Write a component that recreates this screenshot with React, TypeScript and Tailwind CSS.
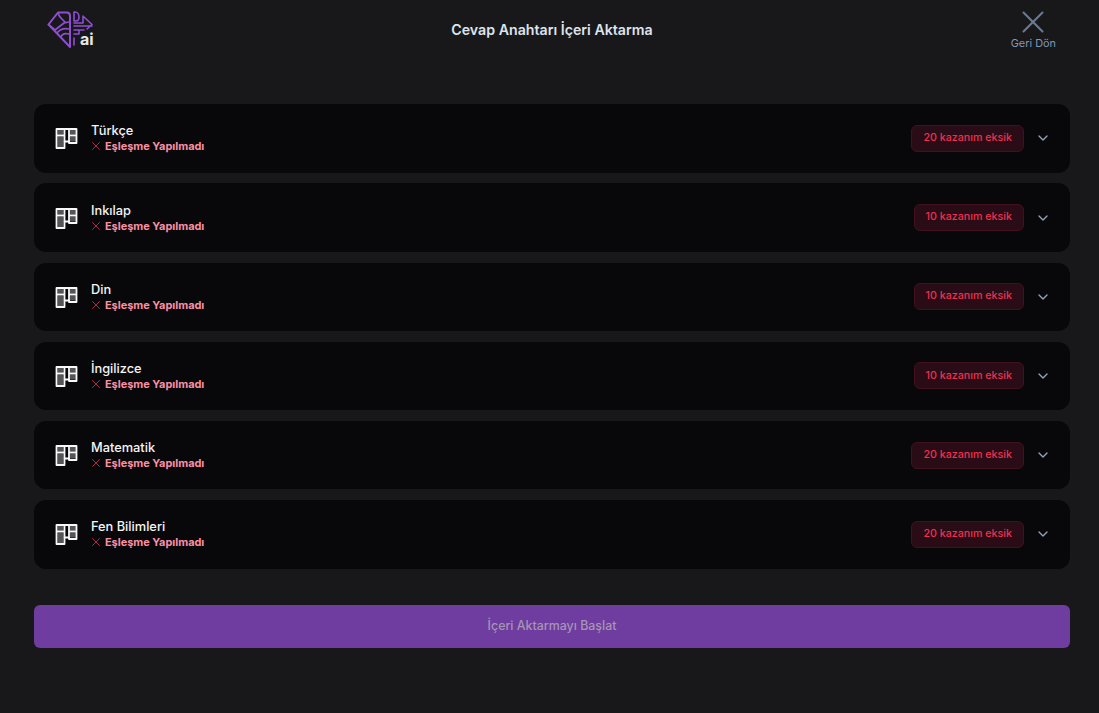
import { ChevronDown, X } from 'lucide-react'

const subjects = [
  { name: 'Türkçe', missing: 20 },
  { name: 'Inkılap', missing: 10 },
  { name: 'Din', missing: 10 },
  { name: 'İngilizce', missing: 10 },
  { name: 'Matematik', missing: 20 },
  { name: 'Fen Bilimleri', missing: 20 },
]

function Logo() {
  return (
    <svg width="48" height="40" viewBox="0 0 48 40" fill="none" stroke="#8f4ed0" strokeWidth="2" strokeLinejoin="round" strokeLinecap="round">
      {/* left half */}
      <path d="M24 38L2.5 15.5L12 3.5H21C23 3.5 24 5 24 7V38Z" />
      <path d="M2.5 15.5L9 21L18 14L23 13M12 4C13 8 16 10 19 13M11 24C14 20 18 19 23 20M15 28C16 25 19 24 23 25" strokeWidth="1.7" />
      {/* right half, circuit */}
      <path d="M28 3V12H30C32 12 33 10 33 8C33 5 31 3 29 3H28Z" strokeWidth="1.6" />
      <path d="M37 7V14H28M38 8L46 15.5L41 20M28 17H46M28 21H38M28 25H33V21M28 29V36" strokeWidth="1.6" />
    </svg>
  )
}

function BoardIcon() {
  return (
    <svg width="23" height="22" viewBox="0 -0.5 23 22" fill="none" stroke="#f8f8f9" strokeWidth="1.8" strokeLinejoin="round">
      <rect x="2.5" y="2.5" width="6" height="4.5" fill="#555558" stroke="none" />
      <rect x="2.5" y="9.5" width="6" height="10" fill="#555558" stroke="none" />
      <rect x="15" y="2.5" width="6" height="4.5" fill="#555558" stroke="none" />
      <rect x="15" y="9.5" width="6" height="4.5" fill="#555558" stroke="none" />
      <path d="M1.5 1.5H21.5V15.5H14V14H9.5V20.5H1.5V1.5Z" />
      <path d="M9.5 1.5V14M14 1.5V15.5M1.5 8H9.5M14 8H21.5" />
    </svg>
  )
}

function SubjectRow({ name, missing }: { name: string; missing: number }) {
  return (
    <div className="flex h-[68.4px] items-center rounded-xl bg-[#08080b] pl-[21px] pr-[19px]">
      <BoardIcon />
      <div className="ml-[13px] flex flex-col">
        <span className="text-[12.8px] font-medium leading-[16px] text-[#f4f4f5]">{name}</span>
        <span className="flex items-center gap-[2px] text-[10.9px] font-bold leading-[14px] text-[#fb8fa3]">
          <X size={14} strokeWidth={1.2} className="-ml-[2px] text-[#f43f5e]" />
          Eşleşme Yapılmadı
        </span>
      </div>
      <div className="ml-auto flex items-center gap-[11px]">
        <span className="flex h-[27px] items-center rounded-md border border-[#43101f] bg-[#2a0c16] px-[11px] pb-[0.5px] text-[10.7px] font-medium text-[#f0304f]">
          {missing} kazanım eksik
        </span>
        <ChevronDown size={16} className="text-[#94a3b8]" />
      </div>
    </div>
  )
}

export default function App() {
  return (
    <div className="flex h-[713px] flex-col bg-[#18181b] pl-[34px] pr-[29px] font-['Inter',sans-serif]">
      <header className="relative flex h-[104.2px] items-start justify-between">
        <div className="relative ml-[12px] mt-[9px] flex">
          <Logo />
          <span className="absolute left-[34px] top-[22px] text-[16px] font-bold leading-[16px] text-[#e8e8ea]">ai</span>
        </div>
        <h1 className="absolute left-0 right-0 top-[21px] text-center text-[14.2px] font-semibold leading-[18px] text-[#dfe3ec]">
          Cevap Anahtarı İçeri Aktarma
        </h1>
        <button className="mr-[14px] mt-[3px] flex flex-col items-center">
          <X size={38} strokeWidth={1.3} className="text-[#6b7a90]" />
          <span className="-mt-[5px] text-[10.9px] leading-[14px] text-[#7f97b5]">Geri Dön</span>
        </button>
      </header>

      <div className="flex flex-col gap-[10.8px]">
        {subjects.map(s => (
          <SubjectRow key={s.name} name={s.name} missing={s.missing} />
        ))}
      </div>

      <button className="mt-[36.4px] flex h-[43px] items-center justify-center rounded-md bg-[#6f3ca0] text-[12.4px] font-medium text-[#a695b5]">
        İçeri Aktarmayı Başlat
      </button>
    </div>
  )
}
